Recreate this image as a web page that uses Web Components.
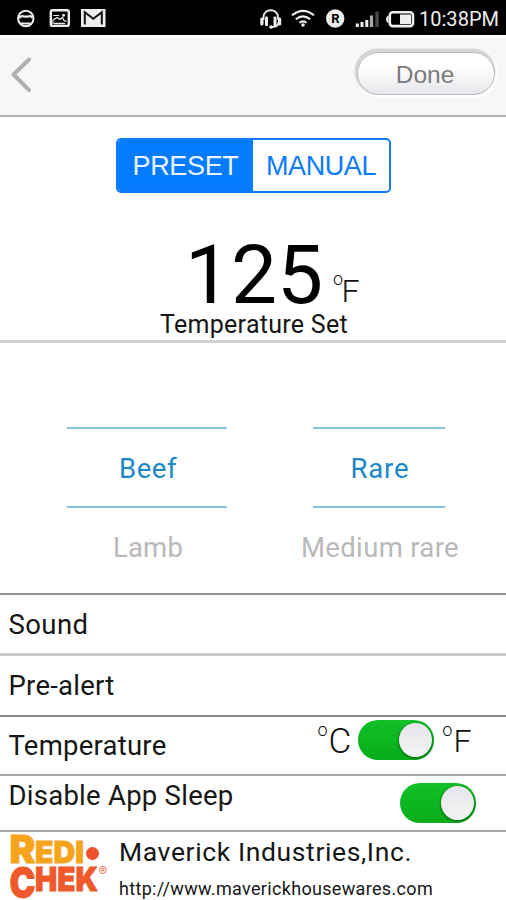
<!DOCTYPE html>
<html lang="en">
<head>
<meta charset="utf-8">
<title>Temperature preset</title>
<style>
body{margin:0;background:#fff;color:#161616;font-family:Roboto,"Liberation Sans",sans-serif}
</style>
</head>
<body>
<preset-screen></preset-screen>
<script>
const define = (name, html, setup) => customElements.define(name, class extends HTMLElement {
  connectedCallback() {
    if (this.shadowRoot) return;
    this.attachShadow({mode: 'open'}).innerHTML = html;
    if (setup) setup(this, this.shadowRoot);
  }
});

// Single line of text; "width" spreads the letters to an exact advance width.
define('fit-text', `<style>
:host{display:block;white-space:nowrap;flex:none;line-height:32px}
span{display:inline-block}
</style><span><slot></slot></span>`, (host, root) => {
  host.style.fontSize = host.getAttribute('size') + 'px';
  const w = +host.getAttribute('width');
  if (!w) return;
  const span = root.querySelector('span');
  const natural = span.getBoundingClientRect().width;
  const n = host.textContent.length;
  span.style.letterSpacing = (w - natural) / n + 'px';
});

define('status-bar', `<style>
:host{display:flex;height:35px;background:#000;color:#eee;justify-content:space-between}
svg{display:block;flex:none}
.right{display:flex}
fit-text{line-height:39px;margin-right:7px;width:80px}
</style>
<svg width="120" height="35" viewBox="0 0 120 35" fill="none" stroke="#eee">
 <circle cx="25.800" cy="18.500" r="7.700" stroke-width="2"/>
 <path d="M19 18q2-2.500 4-1.800q3 1 6 0q2-.5 3.500 1.800" stroke-width="2.200"/>
 <path d="M21 23.500h9.500" stroke-width="2"/>
 <rect x="50.800" y="10.300" width="18" height="15.600" rx="2" stroke-width="2.400"/>
 <path d="M53.300 13.500h13v8l-3-5-2.500 3-3.500-2-4 3z" fill="#000" stroke="none"/>
 <path d="M53.300 15.500h6M53 24l0-4 4-2.500 3 2 2.500-2 1.500 3 2.500 1" stroke-width="1.200"/>
 <path d="M54 23.500h11" stroke-width="1.500"/>
 <circle cx="63.500" cy="15.300" r="1.500" fill="#eee" stroke="none"/>
 <rect x="81" y="9" width="24.500" height="18" fill="#eee" stroke="none"/>
 <path d="M84.800 24.500V12.300l8.500 6.500 8.500-6.500v12.200" stroke="#111" stroke-width="2"/>
</svg>
<div class="right">
<svg width="163" height="35" viewBox="255 0 163 35" fill="none" stroke="#eee">
 <path d="M262.500 20v-3c0-9 14.500-9 14.500 0v3" stroke-width="1.800"/>
 <path d="M277.500 22c0 3-2 5-6.500 5" stroke-width="1.800"/>
 <rect x="259.300" y="17.500" width="3.200" height="8" rx="1.500" fill="#eee" stroke="none"/>
 <rect x="264" y="16.500" width="3" height="9.500" rx="1" fill="#eee" stroke="none"/>
 <rect x="272.500" y="16.500" width="3" height="9.500" rx="1" fill="#eee" stroke="none"/>
 <rect x="277" y="17.500" width="3.200" height="8" rx="1.500" fill="#eee" stroke="none"/>
 <circle cx="270" cy="27" r="1.800" fill="#eee" stroke="none"/>
 <path d="M291 15.300q11-9 22 0M294.800 19.300q7.200-6 14.400 0M298.500 22.800q3.500-2.800 7 0" stroke-width="2.100"/>
 <circle cx="302" cy="25" r="1.800" fill="#eee" stroke="none"/>
 <circle cx="334.200" cy="18.500" r="9.200" fill="#eee" stroke="none"/>
 <text x="334.300" y="23" font-size="13" font-weight="700" text-anchor="middle" fill="#000" stroke="none">R</text>
 <path d="M356.300 27v-3.500M361 27v-5" stroke-width="3"/>
 <path d="M365.800 27v-7" stroke-width="3"/>
 <path d="M370.500 27v-11.500" stroke="#aaa" stroke-width="3.200"/>
 <path d="M376 27V11.500" stroke="#4a4a4a" stroke-width="3.400"/>
 <rect x="388.800" y="12.300" width="23.200" height="13.800" rx="3" stroke-width="2.600"/>
 <path d="M387.500 15.300q-2.500 1-2.500 4t2.500 4z" fill="#eee" stroke="none"/>
 <rect x="399" y="14.500" width="11" height="9.500" fill="#eee" stroke="none"/>
</svg>
<fit-text size="20" width="80">10:38PM</fit-text>
</div>`);

define('pill-button', `<style>
:host{display:block;box-sizing:border-box;width:138px;height:43px;border:1px solid #b4b6ba;border-radius:22px;
background:linear-gradient(#fff 35%,#e5e6ea);box-shadow:-1px -2px 0 1.500px #d3d5d8,1px 1px 0 2px #fff;
color:#7b7b7d;font-family:"Liberation Sans",sans-serif;text-align:center}
fit-text{line-height:43px;margin-left:-2px}
</style><fit-text size="24.500" width="60"><slot></slot></fit-text>`);

define('nav-header', `<style>
:host{display:flex;box-sizing:border-box;height:82px;border-top:2px solid #fff;border-bottom:2px solid #b2b2b2;
background:#f7f7f7;justify-content:space-between;align-items:flex-start;padding:15px 11px 0 9px}
svg{margin-top:4px}
</style>
<svg width="24" height="38" viewBox="0 0 24 38"><path d="M20 3.500 4.500 18.500 20 34" fill="none" stroke="#b0b0b0" stroke-width="4" stroke-linecap="round" stroke-linejoin="round"/></svg>
<pill-button>Done</pill-button>`);

define('mode-switch', `<style>
:host{display:grid;grid-template-columns:135px 136px;box-sizing:border-box;width:275px;height:55px;
border:2px solid #1279f8;border-radius:5px;overflow:hidden;text-align:center;font-family:"Liberation Sans",sans-serif}
div{color:#0a7aff}
.on{background:#057bff;color:#eaf3ff}
fit-text{line-height:53px}
</style><div class="on"><fit-text size="27" width="106">PRESET</fit-text></div><div><fit-text size="27" width="110">MANUAL</fit-text></div>`);

define('degree-unit', `<style>
:host{display:flex;align-items:flex-start;font-weight:300;color:#111}
.o{font-size:18px;line-height:18px}
.u{font-size:var(--size,32px);line-height:32px;margin-top:var(--drop,4px);margin-left:var(--gap,0px)}
</style><span class="o">o</span><span class="u"><slot></slot></span>`);

define('set-point', `<style>
:host{display:flex;flex-direction:column;box-sizing:border-box;height:226px;border-bottom:3px solid #cfcfcf;padding-top:21px}
mode-switch{margin-left:116px}
.temp{display:flex;height:117px;padding-left:185px;align-items:flex-start;color:#000}
.num{line-height:80px;margin-top:42px;width:140px}
degree-unit{margin:77px 0 0 8px;--drop:5px;--gap:-1.500px}
.cap{margin-left:160px;line-height:29px}
</style>
<mode-switch></mode-switch>
<div class="temp"><fit-text class="num" size="82" width="138">125</fit-text><degree-unit>F</degree-unit></div>
<fit-text class="cap" size="25" width="188">Temperature Set</fit-text>`);

define('wheel-picker', `<style>
:host{display:flex;flex-direction:column;align-items:center}
.sel{box-sizing:border-box;display:flex;justify-content:center;align-items:center;width:100%;height:81px;
border:solid #86c5df;border-width:2px 0;color:#2088c9;padding:3px 0 0 2px}
.next{color:#b9b9b9;margin-top:24px;padding-left:2px}
</style><div class="sel"><slot name="selected"></slot></div><div class="next"><slot name="next"></slot></div>`);

define('setting-row', `<style>
:host{display:flex;box-sizing:border-box;align-items:flex-start;padding-left:8.500px;border-bottom:2px solid #aaa}
</style><slot></slot>`);

define('toggle-switch', `<style>
:host{display:flex;box-sizing:border-box;width:76px;height:40px;border-radius:20px;padding:3px 2px;justify-content:flex-end;
background:linear-gradient(#12c028,#08ad1a)}
i{width:33px;height:34px;border-radius:50%;background:linear-gradient(#e6e6ea,#f4f4f6);box-shadow:0 1px 2px 1px #087a14}
</style><i></i>`);

define('redi-chek-logo', `<style>
:host{display:block;flex:none}svg{display:block;overflow:visible}
text{font-family:Inter,"Open Sans",sans-serif;font-weight:900}
.a{fill:#f6a41c;stroke:#f6a41c;stroke-width:.8}.b{fill:#f0592b;stroke:#f0592b;stroke-width:.8}
</style>
<svg width="102" height="68" viewBox="8 832 102 68">
<text class="a" x="9.500" y="863" font-size="39" textLength="26" lengthAdjust="spacingAndGlyphs">R</text>
<text class="a" x="35" y="863" font-size="30" textLength="49" lengthAdjust="spacingAndGlyphs">EDI</text>
<circle cx="92.500" cy="853.500" r="6.500" fill="#f0502b"/>
<text class="b" x="9.500" y="897.500" font-size="42" textLength="26" lengthAdjust="spacingAndGlyphs">C</text>
<text class="b" x="35" y="890.500" font-size="33" textLength="63" lengthAdjust="spacingAndGlyphs">HEK</text>
<text x="98.500" y="875.500" font-size="13" fill="#f37a58" style="font-weight:400">®</text>
</svg>`);

define('brand-footer', `<style>
:host{display:flex;height:68px;padding-left:8px}
.txt{display:flex;flex-direction:column;padding-left:9px}
.name{margin-top:4px}.url{margin-top:4.500px}
</style>
<redi-chek-logo></redi-chek-logo>
<div class="txt"><fit-text class="name" size="26.500" width="293">Maverick Industries,Inc.</fit-text>
<fit-text class="url" size="18" width="314">http://www.maverickhousewares.com</fit-text></div>`);

define('preset-screen', `<style>
:host{display:block;width:506px;height:900px;overflow:hidden;background:#fff}
.pickers{display:grid;grid-template-columns:160px 132px;column-gap:86px;padding:84px 0 0 67px;box-sizing:border-box;height:252px;border-bottom:2px solid #929292}
.sound{height:61px;padding-top:14px;border-bottom:3px solid #cacaca}
.pre{height:61px;padding-top:14px;border-color:#898989}
.temp{height:59px}.temp fit-text{margin-top:13px;width:309px}
.sleep{height:56px}.sleep fit-text{margin-top:4px;width:391px}
.temp toggle-switch{margin:3px 8px 0 7px}.sleep toggle-switch{margin-top:7px}
.temp degree-unit{margin-top:4px;--drop:5px;--gap:1px;--size:35px}
.temp .f{--gap:1px;--size:32px;--drop:4px}
</style>
<status-bar></status-bar>
<nav-header></nav-header>
<set-point></set-point>
<div class="pickers">
<wheel-picker><fit-text slot="selected" size="27.500" width="58">Beef</fit-text><fit-text slot="next" size="27.500" width="70">Lamb</fit-text></wheel-picker>
<wheel-picker><fit-text slot="selected" size="27.500" width="59">Rare</fit-text><fit-text slot="next" size="27.500" width="158">Medium rare</fit-text></wheel-picker>
</div>
<setting-row class="sound"><fit-text size="27.500" width="80">Sound</fit-text></setting-row>
<setting-row class="pre"><fit-text size="27.500" width="106">Pre-alert</fit-text></setting-row>
<setting-row class="temp"><fit-text size="27.500" width="158">Temperature</fit-text><degree-unit>C</degree-unit><toggle-switch></toggle-switch><degree-unit class="f">F</degree-unit></setting-row>
<setting-row class="sleep"><fit-text size="27.500" width="225">Disable App Sleep</fit-text><toggle-switch></toggle-switch></setting-row>
<brand-footer></brand-footer>`);
</script>
</body>
</html>
